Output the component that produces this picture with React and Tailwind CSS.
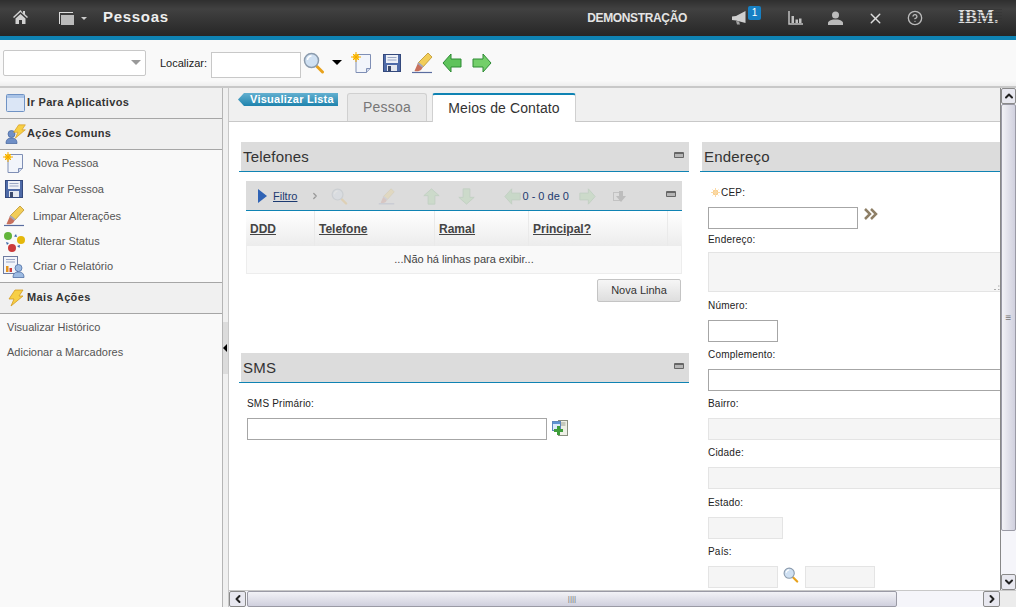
import React from 'react'
import { X, CircleHelp, ChevronDown, ChevronUp, ChevronLeft, ChevronRight } from 'lucide-react'

const NewDocIcon = ({ size = 22 }) => (
  <svg width={size} height={size} viewBox="0 0 22 22">
    <path d="M5 2.5h14.5v14l-4 4H5z" fill="#f2f5fb" stroke="#7f8fb5" />
    <path d="M15.5 20.5v-4h4" fill="#cfd8ea" stroke="#7f8fb5" />
    <circle cx="5" cy="5" r="3" fill="#ffd21f" />
    <path d="M5 0v10M0 5h10M2 2l6 6M8 2l-6 6" stroke="#f5a800" strokeWidth="1" />
  </svg>
)

const SaveIcon = ({ size = 18 }) => (
  <svg width={size} height={size} viewBox="0 0 18 18">
    <rect x="0.5" y="0.5" width="17" height="17" fill="#4f6ba8" stroke="#34497c" />
    <rect x="3" y="1" width="12" height="8" fill="#eef1f7" />
    <path d="M4.5 3.5h9M4.5 6h9" stroke="#9aa7c5" />
    <rect x="4" y="11" width="10" height="6" fill="#e6e9f0" />
    <rect x="5" y="12" width="3" height="5" fill="#3c4a6c" />
  </svg>
)

const EraserIcon = ({ size = 22 }) => (
  <svg width={size} height={size} viewBox="0 0 22 22">
    <path d="M1 20.500h20" stroke="#5a6da0" strokeWidth="1.200" />
    <path d="M7 11 17 1l4 4-9 10z" fill="#f2cd58" stroke="#b48a1d" strokeWidth=".7" />
    <path d="M7 11l5 4-2 3c-2 1.500-5 1.500-6.500 1z" fill="#c8705c" />
    <path d="M7 11l5 4" stroke="#a5a5b8" strokeWidth="2" />
  </svg>
)

const LensIcon = ({ size = 22, faded = false }) => (
  <svg width={size} height={size} viewBox="0 0 22 22" className={faded ? 'opacity-20' : ''}>
    <path d="M14 14.500l5.500 5.500" stroke="#e8a21c" strokeWidth="3" strokeLinecap="round" />
    <circle cx="8.500" cy="8.500" r="7" fill="#cfe0f2" stroke="#8b9bad" strokeWidth="1.500" />
    <path d="M4.500 8a4 4 0 0 1 4-4" stroke="#fff" strokeWidth="1.500" fill="none" />
  </svg>
)

const ArrowIcon = ({ dir, size = 20, faded = false }) => {
  const rotate = { left: 'rotate-180', right: '', up: '-rotate-90', down: 'rotate-90' }[dir]
  return (
    <svg width={size} height={size} viewBox="0 0 20 20" className={`${rotate} ${faded ? 'opacity-15' : ''}`}>
      <path d="M1 6h10V1l8 9-8 9v-5H1z" fill={dir === 'left' ? '#5fc35b' : '#74cf6a'} stroke="#2e8b35" />
    </svg>
  )
}

const WindowIcon = () => (
  <svg width="19" height="18" viewBox="0 0 19 18">
    <rect x="0.500" y="0.500" width="18" height="17" rx="1" fill="#dbe6f6" stroke="#6f92c4" />
    <rect x="1" y="1" width="17" height="3" fill="#a9c3e6" />
  </svg>
)

const BoltIcon = ({ size = 18 }) => (
  <svg width={size} height={size} viewBox="0 0 18 18">
    <path d="M8 1h8l-4 6h4L4 17l3-7H2z" fill="#f7cf45" stroke="#d39a1f" strokeWidth=".8" />
  </svg>
)

const PersonIcon = ({ color = '#6f8fc6', stroke = '#42639c' }) => (
  <svg width="13" height="14" viewBox="0 0 13 14">
    <circle cx="6.500" cy="4" r="3.500" fill={color} stroke={stroke} strokeWidth=".7" />
    <path d="M1 13.500c0-4 2-5.500 5.500-5.500s5.500 1.500 5.500 5.500z" fill={color} stroke={stroke} strokeWidth=".7" />
  </svg>
)

const ActionsIcon = () => (
  <div className="relative w-[22px] h-[20px]">
    <div className="absolute left-0 bottom-0"><PersonIcon /></div>
    <div className="absolute right-0 top-0"><BoltIcon size={15} /></div>
  </div>
)

const StatusIcon = () => (
  <svg width="22" height="22" viewBox="0 0 22 22">
    <circle cx="5" cy="5" r="4" fill="#62b43a" />
    <circle cx="18" cy="9" r="4" fill="#e5b80c" />
    <circle cx="9" cy="17" r="4" fill="#cc3b3b" />
    <path d="M13 3l-2 2.500 3 .5zM3 11l3 1-2 2zM14 15l3-1-.5 3z" fill="#3e6aa8" />
  </svg>
)

const ReportIcon = () => (
  <div className="relative w-[22px] h-[22px]">
    <svg width="15" height="18" viewBox="0 0 15 18" className="absolute left-0 top-0">
      <rect x="0.500" y="0.500" width="14" height="17" fill="#f2f4fa" stroke="#6d7ba0" />
      <path d="M3 3.500h9M3 6h9" stroke="#9aa7c5" />
      <rect x="3" y="10" width="2.500" height="6" fill="#e3931d" />
      <rect x="6.500" y="12" width="2.500" height="4" fill="#cc3b3b" />
    </svg>
    <div className="absolute right-0 bottom-0"><PersonIcon color="#9dbbe2" /></div>
  </div>
)

const CollapseIcon = () => (
  <div className="w-[10px] h-[6px] border border-[#666] bg-[#b5b5b5] border-t-2 rounded-[1px]"></div>
)

const AddRowIcon = () => (
  <svg width="16" height="16" viewBox="0 0 16 16">
    <rect x="6.500" y="0.500" width="9" height="15" fill="#eef0e6" stroke="#8a8f80" />
    <path d="M8.500 3h5M8.500 5h5" stroke="#9aa090" />
    <rect x="0.500" y="1.500" width="8" height="9" fill="#dceafa" stroke="#5d86bb" />
    <rect x="1" y="2" width="7" height="2" fill="#5d93d2" />
    <path d="M6.500 6v9M2 10.500h9" stroke="#3f9e3a" strokeWidth="3" />
  </svg>
)

const HomeIcon = () => (
  <svg width="15" height="14" viewBox="0 0 15 14" fill="#d0d0d0">
    <path d="M7.500 0 0 7l1 1 6.500-6 6.500 6 1-1-3-2.800V1h-2v2.300z" />
    <path d="M2.500 8.500 7.500 4l5 4.500V14H9V10H6v4H2.500z" />
  </svg>
)

const Megaphone = () => (
  <svg width="15" height="14" viewBox="0 0 15 14">
    <path d="M14.500 0v12L5 9.500 1 9V5.500l4-.5z" fill="#cfcfcf" />
    <path d="M5 10l1 3.500h3l-1-3z" fill="#a5a5a5" />
  </svg>
)

const BarsIcon = () => (
  <svg width="15" height="14" viewBox="0 0 15 14">
    <path d="M1 0v13h14" stroke="#c0c0c0" strokeWidth="1.500" fill="none" />
    <path d="M3.500 5h2.500v7H3.500zM7.500 8.500H10V12H7.500zM11 7.500h2.500V12H11z" fill="#c0c0c0" />
  </svg>
)

const DoubleChevron = () => (
  <svg width="14" height="12" viewBox="0 0 14 12">
    <path d="M1 1l5 5-5 5M7 1l5 5-5 5" stroke="#8e7f66" strokeWidth="2.500" fill="none" />
  </svg>
)

const ExportIcon = () => (
  <svg width="14" height="13" viewBox="0 0 14 13" className="opacity-30">
    <rect x="0.500" y="2.500" width="6" height="8" fill="none" stroke="#888" />
    <path d="M6 1h4v5h3l-5 6-5-6h3z" fill="#777" />
  </svg>
)

const RequiredIcon = () => (
  <svg width="9" height="9" viewBox="0 0 9 9">
    <circle cx="4.500" cy="4.500" r="2.500" fill="#f8bf6a" />
    <path d="M4.500 0v9M0 4.500h9M1.500 1.500l6 6M7.500 1.500l-6 6" stroke="#fbd9a4" />
  </svg>
)

const SideHead = ({ icon, children }) => (
  <div className="h-[31px] flex items-center pb-[1px] bg-[#f0f0f0] border-b border-[#a6a6a6] text-[11px] font-bold text-[#333] tracking-[0.35px]">
    <div className="w-[27px] pl-[4px] flex justify-center shrink-0">{icon}</div>
    <span>{children}</span>
  </div>
)

const SideItem = ({ icon, h, children }) => (
  <div className={`flex items-center text-[11px] text-[#555] ${h}`}>
    <div className="w-[33px] shrink-0 flex justify-center pr-[5px]">{icon}</div>
    <span>{children}</span>
  </div>
)

const SectionHead = ({ title, collapse = true, className = '' }) => (
  <div className={`border-b border-[#0f83b3] pl-[2px] ${className}`}>
    <div className="h-[29px] bg-[#dcdcdc] flex items-center justify-between pl-[2px] pr-[5px] text-[15px] text-[#333] tracking-[0.2px]">
      <span className="pt-[2px]">{title}</span>
      {collapse && <div className="-mt-[4px]"><CollapseIcon /></div>}
    </div>
  </div>
)

const Label = ({ className = '', children }) => (
  <div className={`pt-[1px] text-[10px] leading-[12px] text-[#222] tracking-[0.2px] ${className}`}>{children}</div>
)

const Input = ({ className = '', disabled = false }) => (
  <div className={`h-[22px] border ${disabled ? 'bg-[#f5f5f5] border-[#e4e4e4]' : 'bg-white border-[#a6a6a6]'} ${className}`}></div>
)

const Column = ({ label, className }) => (
  <div className={`h-full flex items-center border-r border-[#eaeaea] font-bold underline text-[#444] text-[12px] ${className}`}>{label}</div>
)

const App = () => {
  return (
    <div className="w-[1016px] h-[607px] overflow-hidden flex flex-col bg-white text-[11px] font-[Liberation_Sans,sans-serif]">
      {/* header */}
      <div className="h-[36px] shrink-0 flex items-center bg-[linear-gradient(#2f2f2f,#414141_25%,#262626)] text-white">
        <div className="ml-[13px] -mt-[2px]"><HomeIcon /></div>
        <div className="ml-[31px] flex items-center">
          <div className="relative w-[14px] h-[12px] border-t border-l border-[#ddd]">
            <div className="absolute left-[1px] top-[2px] w-[13px] h-[10px] bg-[#bbb]"></div>
          </div>
          <div className="ml-[8px] w-0 h-0 border-l-[3px] border-r-[3px] border-t-[3px] border-l-transparent border-r-transparent border-t-[#ccc]"></div>
        </div>
        <div className="ml-[16px] text-[15px] font-bold tracking-[0.7px] text-[#eee] -mt-[1px]">Pessoas</div>
        <div className="ml-auto text-[12px] font-bold text-[#e4e4e4] tracking-[-0.35px]">DEMONSTRAÇÃO</div>
        <div className="relative ml-[44px] w-[16px] h-[14px]">
          <Megaphone />
          <div className="absolute -right-[14px] -top-[5px] w-[13px] h-[14px] rounded-[2px] bg-[#1680c4] text-white text-[10px] leading-[14px] text-center">1</div>
        </div>
        <div className="ml-[41px]"><BarsIcon /></div>
        <svg width="15" height="14" viewBox="0 0 15 14" className="ml-[25px]">
          <circle cx="7.500" cy="4" r="3.500" fill="#bbb" />
          <path d="M0 14v-2c0-2 3-3 5-3.500h5c2 .5 5 1.500 5 3.500v2z" fill="#bbb" />
        </svg>
        <X size={17} strokeWidth={2} className="ml-[24px] text-[#ddd]" />
        <CircleHelp size={16} strokeWidth={2} className="ml-[23px] text-[#bbb]" />
        <div className="relative ml-[35px] mr-[14px] w-[44px] -mt-[3px] font-[Liberation_Serif,serif] text-[18px] leading-[20px] font-bold text-[#ddd] whitespace-nowrap">
          IBM.
          <div className="absolute inset-0 bg-[repeating-linear-gradient(#0000_0,#0000_2px,#33333399_2px,#33333399_3px)]"></div>
        </div>
      </div>
      <div className="h-[4px] shrink-0 bg-[#0f83b3]"></div>

      {/* toolbar */}
      <div className="h-[48px] shrink-0 flex items-center pl-[3px] pb-[1px] bg-[linear-gradient(#f9f9f9,#f9f9f9_88%,#eeeeee)] border-b-2 border-[#c8c8c8]">
        <div className="w-[143px] h-[26px] bg-white border border-[#c8c8c8] rounded-[2px] flex items-center justify-end pr-[4px]">
          <div className="w-0 h-0 border-l-[5px] border-r-[5px] border-t-[5px] border-l-transparent border-r-transparent border-t-[#999]"></div>
        </div>
        <div className="ml-[14px] mt-[2px] w-[47px] text-[11px] text-[#222]">Localizar:</div>
        <div className="ml-[4px] mt-[5px] w-[90px] h-[26px] bg-white border border-[#c8c8c8]"></div>
        <div className="ml-[2px]"><LensIcon size={22} /></div>
        <div className="ml-[7px] w-0 h-0 border-l-[5px] border-r-[5px] border-t-[5px] border-l-transparent border-r-transparent border-t-black"></div>
        <div className="ml-[9px]"><NewDocIcon /></div>
        <div className="ml-[10px]"><SaveIcon /></div>
        <div className="ml-[10px]"><EraserIcon /></div>
        <div className="ml-[9px]"><ArrowIcon dir="left" /></div>
        <div className="ml-[10px]"><ArrowIcon dir="right" /></div>
      </div>

      <div className="flex-1 min-h-0 flex">
        {/* sidebar */}
        <div className="w-[223px] shrink-0 border-r border-[#b5b5b5] bg-[#f9f9f9]">
          <SideHead icon={<WindowIcon />}>Ir Para Aplicativos</SideHead>
          <SideHead icon={<ActionsIcon />}>Ações Comuns</SideHead>
          <div>
            <SideItem h="h-[26px]" icon={<NewDocIcon />}>Nova Pessoa</SideItem>
            <SideItem h="h-[26px]" icon={<SaveIcon />}>Salvar Pessoa</SideItem>
            <SideItem h="h-[28px]" icon={<EraserIcon />}>Limpar Alterações</SideItem>
            <SideItem h="h-[23px]" icon={<StatusIcon />}>Alterar Status</SideItem>
            <SideItem h="h-[27px] mb-[2px]" icon={<ReportIcon />}>Criar o Relatório</SideItem>
          </div>
          <div className="border-t border-[#a6a6a6]">
            <SideHead icon={<BoltIcon />}>Mais Ações</SideHead>
          </div>
          <div className="pt-[1px] pl-[7px] text-[11px] text-[#555]">
            <div className="h-[25px] flex items-center">Visualizar Histórico</div>
            <div className="h-[25px] flex items-center">Adicionar a Marcadores</div>
          </div>
        </div>

        {/* splitter */}
        <div className="w-[6px] shrink-0 flex flex-col bg-[#f0f0f0] border-r border-[#c8c8c8]">
          <div className="mt-[234px] h-[52px] bg-[#dcdcdc] flex items-center">
            <div className="w-0 h-0 border-t-[4px] border-b-[4px] border-r-[4px] border-t-transparent border-b-transparent border-r-black"></div>
          </div>
        </div>

        {/* main */}
        <div className="flex-1 min-w-0 flex flex-col">
          <div className="flex-1 min-h-0 flex">
            <div className="flex-1 min-w-0 overflow-hidden flex flex-col">
              {/* tabs */}
              <div className="h-[34px] shrink-0 flex items-end pl-[9px] bg-[#f0f0f0] border-b border-[#c8c8c8]">
                <div className="self-start mt-[5px] w-[100px] h-[13px] bg-[linear-gradient(#63b0d0,#1f83ad)] [clip-path:polygon(6px_0,100%_0,100%_100%,6px_100%,0_50%)] text-white text-[11px] leading-[12px] font-bold tracking-[0.25px] pl-[12px] whitespace-nowrap">Visualizar Lista</div>
                <div className="ml-[9px] w-[80px] h-[28px] bg-[#e8e8e8] border border-b-0 border-[#d0d0d0] rounded-t-[3px] text-[#777] text-[14px] tracking-[0.2px] flex items-center justify-center">Pessoa</div>
                <div className="ml-[5px] -mb-[1px] w-[144px] h-[29px] pb-[1px] bg-white border border-b-0 border-[#d0d0d0] border-t-2 border-t-[#0f83b3] rounded-t-[3px] text-[#333] text-[14px] tracking-[0.1px] flex items-center justify-center">Meios de Contato</div>
              </div>

              <div className="flex-1 min-h-0 flex pt-[20px] pl-[10px]">
                {/* left column */}
                <div className="w-[450px] shrink-0">
                  <SectionHead title="Telefones" />
                  <div className="mt-[9px] ml-[7px] mr-[7px]">
                    <div className="h-[30px] pt-[1px] bg-[#dcdcdc] border-b border-[#0f83b3] flex items-center pl-[12px] pr-[6px] text-[#1c3a70] text-[11px]">
                      <div className="w-0 h-0 border-t-[7px] border-b-[7px] border-l-[9px] border-t-transparent border-b-transparent border-l-[#2f63b5]"></div>
                      <span className="ml-[6px] underline">Filtro</span>
                      <ChevronRight size={10} className="ml-[13px] text-[#999]" strokeWidth={3} />
                      <div className="ml-[11px]"><LensIcon size={17} faded /></div>
                      <div className="ml-[30px] opacity-20"><EraserIcon size={17} /></div>
                      <div className="ml-[28px]"><ArrowIcon dir="up" size={17} faded /></div>
                      <div className="ml-[18px]"><ArrowIcon dir="down" size={17} faded /></div>
                      <div className="ml-[29px]"><ArrowIcon dir="left" size={17} faded /></div>
                      <span className="ml-[1px]">0 - 0 de 0</span>
                      <div className="ml-[10px]"><ArrowIcon dir="right" size={17} faded /></div>
                      <div className="ml-[17px]"><ExportIcon /></div>
                      <div className="ml-auto -mt-[4px]"><CollapseIcon /></div>
                    </div>
                    <div className="h-[35px] flex bg-[linear-gradient(#ffffff,#ececec)]">
                      <Column label="DDD" className="w-[69px] pl-[4px]" />
                      <Column label="Telefone" className="w-[120px] pl-[4px]" />
                      <Column label="Ramal" className="w-[94px] pl-[4px]" />
                      <Column label="Principal?" className="w-[139px] pl-[4px]" />
                    </div>
                    <div className="h-[28px] bg-[#f9f9f9] border-x border-b border-[#ededed] flex items-center justify-center text-[#444] text-[11px]">...Não há linhas para exibir...</div>
                    <div className="mt-[5px] flex justify-end pr-[1px]">
                      <div className="w-[84px] h-[23px] rounded-[2px] border border-[#c4c4c4] bg-[linear-gradient(#f6f6f6,#dedede)] text-[#333] text-[11px] flex items-center justify-center">Nova Linha</div>
                    </div>
                  </div>

                  <SectionHead title="SMS" className="mt-[51px]" />
                  <Label className="mt-[14px] ml-[8px]">SMS Primário:</Label>
                  <div className="mt-[8px] ml-[8px] flex">
                    <Input className="w-[300px]" />
                    <div className="ml-[5px] mt-[2px]"><AddRowIcon /></div>
                  </div>
                </div>

                {/* right column */}
                <div className="w-[400px] shrink-0 ml-[11px]">
                  <SectionHead title="Endereço" collapse={false} />
                  <div className="pl-[8px]">
                    <div className="mt-[14px] ml-[3px] flex items-center">
                      <div className="w-[10px]"><RequiredIcon /></div>
                      <Label>CEP:</Label>
                    </div>
                    <div className="mt-[8px] flex">
                      <Input className="w-[150px]" />
                      <div className="ml-[6px] mt-[1px]"><DoubleChevron /></div>
                    </div>
                    <Label className="mt-[4px]">Endereço:</Label>
                    <div className="relative mt-[6px] w-[400px] h-[40px] bg-[#f5f5f5] border border-[#e4e4e4]">
                      <svg width="6" height="6" viewBox="0 0 6 6" className="absolute left-[285px] bottom-0">
                        <path d="M0 4.500h2M4 1h1.500M4 4.500h1.500" stroke="#aaa" />
                      </svg>
                    </div>
                    <Label className="mt-[7px]">Número:</Label>
                    <Input className="mt-[8px] w-[70px]" />
                    <Label className="mt-[6px]">Complemento:</Label>
                    <Input className="mt-[8px] w-[400px]" />
                    <Label className="mt-[6px]">Bairro:</Label>
                    <Input disabled className="mt-[8px] w-[400px]" />
                    <Label className="mt-[6px]">Cidade:</Label>
                    <Input disabled className="mt-[8px] w-[400px]" />
                    <Label className="mt-[7px]">Estado:</Label>
                    <Input disabled className="mt-[8px] w-[75px]" />
                    <Label className="mt-[6px]">País:</Label>
                    <div className="mt-[8px] flex">
                      <Input disabled className="w-[70px]" />
                      <div className="ml-[5px] mt-[1px]"><LensIcon size={16} /></div>
                      <Input disabled className="ml-[6px] w-[70px]" />
                    </div>
                  </div>
                </div>
              </div>
            </div>

            {/* vertical scrollbar */}
            <div className="w-[16px] shrink-0 flex flex-col bg-[#f5f5fa] border-l border-[#888]">
              <div className="h-[16px] border border-[#8a8a8a] rounded-[2px] bg-[#e8e8f0] flex items-center justify-center"><ChevronUp size={12} strokeWidth={4} className="text-[#222]" /></div>
              <div className="h-[427px] border border-[#9a9aa5] rounded-[2px] bg-[linear-gradient(90deg,#f2f2f6,#d0d0de)] flex items-center justify-center text-[#777] text-[10px] leading-none">≡</div>
              <div className="mt-auto h-[16px] border border-[#8a8a8a] rounded-[2px] bg-[#e8e8f0] flex items-center justify-center"><ChevronDown size={12} strokeWidth={4} className="text-[#222]" /></div>
            </div>
          </div>

          {/* horizontal scrollbar */}
          <div className="h-[17px] shrink-0 flex bg-[#f5f5fa] border-t border-[#c8c8c8]">
            <div className="w-[17px] border border-[#8a8a8a] rounded-[2px] bg-[#e8e8f0] flex items-center justify-center"><ChevronLeft size={12} strokeWidth={4} className="text-[#222]" /></div>
            <div className="w-[650px] ml-[1px] border border-[#9a9aa5] rounded-[2px] bg-[linear-gradient(#f2f2f6,#d0d0de)] flex items-center justify-center text-[#777] text-[8px] leading-none">||||</div>
            <div className="ml-auto w-[17px] border border-[#8a8a8a] rounded-[2px] bg-[#e8e8f0] flex items-center justify-center"><ChevronRight size={12} strokeWidth={4} className="text-[#222]" /></div>
            <div className="w-[16px] bg-[#ececec]"></div>
          </div>
        </div>
      </div>
    </div>
  )
}

export default App
